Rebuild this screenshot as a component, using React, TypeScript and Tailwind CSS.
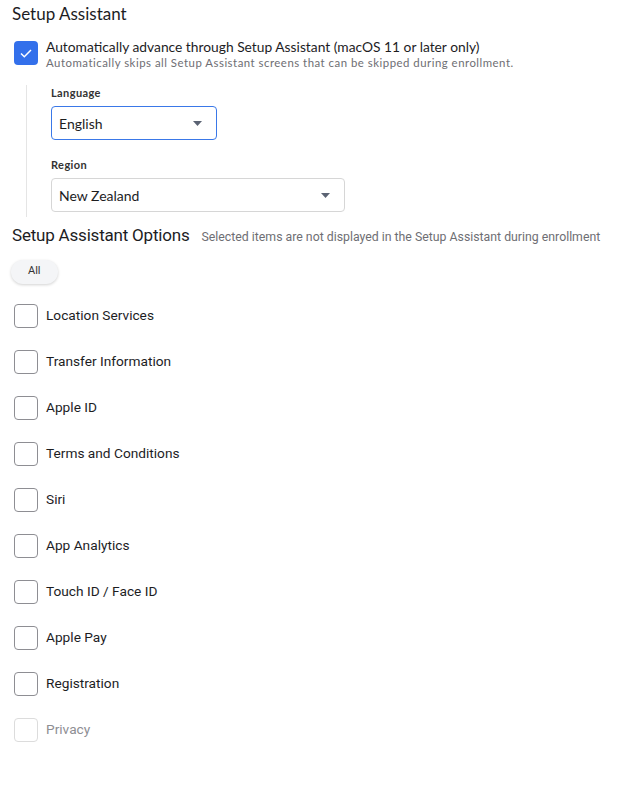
import React from "react";

const OPTIONS = [
  "Location Services",
  "Transfer Information",
  "Apple ID",
  "Terms and Conditions",
  "Siri",
  "App Analytics",
  "Touch ID / Face ID",
  "Apple Pay",
  "Registration",
];

function Caret() {
  return (
    <svg width="9" height="5" viewBox="0 0 9 5" className="fill-[#5b6373]">
      <path d="M0 0h9L4.5 5z" />
    </svg>
  );
}

function Select({ value, width, focused }: { value: string; width: string; focused?: boolean }) {
  return (
    <div
      className={`flex h-[34px] items-center justify-between rounded-[4px] border bg-white pl-[7px] pr-[14px] text-[14px] text-[#1d1d1f] ${width} ${
        focused ? "border-[#3a78e8]" : "border-[#d6d6d6]"
      }`}
    >
      <span>{value}</span>
      <Caret />
    </div>
  );
}

function Box({ disabled }: { disabled?: boolean }) {
  return (
    <span
      className={`h-[24px] w-[24px] shrink-0 rounded-[4px] border bg-white ${
        disabled ? "border-[#dcdcdc]" : "border-[#8e8e93]"
      }`}
    />
  );
}

export default function App() {
  return (
    <div className="min-h-[791px] w-[627px] bg-white font-['Lato','Liberation_Sans',sans-serif] text-[#1d1d1f]">
      <div className="px-[12px] pt-[3px]">
        <h2 className="text-[17px] leading-[22px]">Setup Assistant</h2>

        <div className="mt-[16px] flex gap-[8px] pl-[2px]">
          <span className="flex h-[24px] w-[24px] shrink-0 items-center justify-center rounded-[4px] bg-[#3370eb]">
            <svg width="12" height="9" viewBox="0 0 12 9" fill="none" stroke="white" strokeWidth="1.5">
              <path d="M1 4.5l3.3 3.2L11 1" />
            </svg>
          </span>
          <div className="-mt-[3px]">
            <div className="text-[13.8px] leading-[18px]">
              Automatically advance through Setup Assistant (macOS 11 or later only)
            </div>
            <div className="text-[11.4px] leading-[13px] tracking-[0.5px] text-[#6e6e73]">
              Automatically skips all Setup Assistant screens that can be skipped during enrollment.
            </div>
          </div>
        </div>

        <div className="ml-[14px] mt-[16px] border-l border-[#e5e5e5] pb-[5px] pl-[24px]">
          <div className="pt-[1px] text-[11px] font-bold leading-[14px] tracking-[0.4px] text-[#333]">Language</div>
          <div className="mt-[6px]">
            <Select value="English" width="w-[166px]" focused />
          </div>
          <div className="mt-[18px] text-[11px] font-bold leading-[14px] tracking-[0.4px] text-[#333]">Region</div>
          <div className="mt-[6px]">
            <Select value="New Zealand" width="w-[294px]" />
          </div>
        </div>
      </div>

      <div className="mt-[7px] flex items-baseline gap-[12px] px-[12px] font-['Roboto','Liberation_Sans',sans-serif]">
        <h2 className="text-[17px] leading-[22px] tracking-[-0.2px]">Setup Assistant Options</h2>
        <span className="text-[12.3px] text-[#6e6e73]">
          Selected items are not displayed in the Setup Assistant during enrollment
        </span>
      </div>

      <div className="px-[11px] pt-[11px] font-['Roboto','Liberation_Sans',sans-serif]">
        <button className="h-[24px] rounded-full bg-[#f4f5f7] px-[17px] text-[11px] text-[#333] shadow-[0_1px_3px_rgba(0,0,0,0.18)]">
          All
        </button>
      </div>

      <div className="mt-[20px] flex flex-col gap-[22px] px-[14px] font-['Roboto','Liberation_Sans',sans-serif]">
        {OPTIONS.map((o) => (
          <label key={o} className="flex h-[24px] items-center gap-[8px] text-[13.7px]">
            <Box />
            <span>{o}</span>
          </label>
        ))}
        <label className="flex h-[24px] items-center gap-[8px] text-[13.7px] text-[#8e8e93]">
          <Box disabled />
          <span>Privacy</span>
        </label>
      </div>
    </div>
  );
}
